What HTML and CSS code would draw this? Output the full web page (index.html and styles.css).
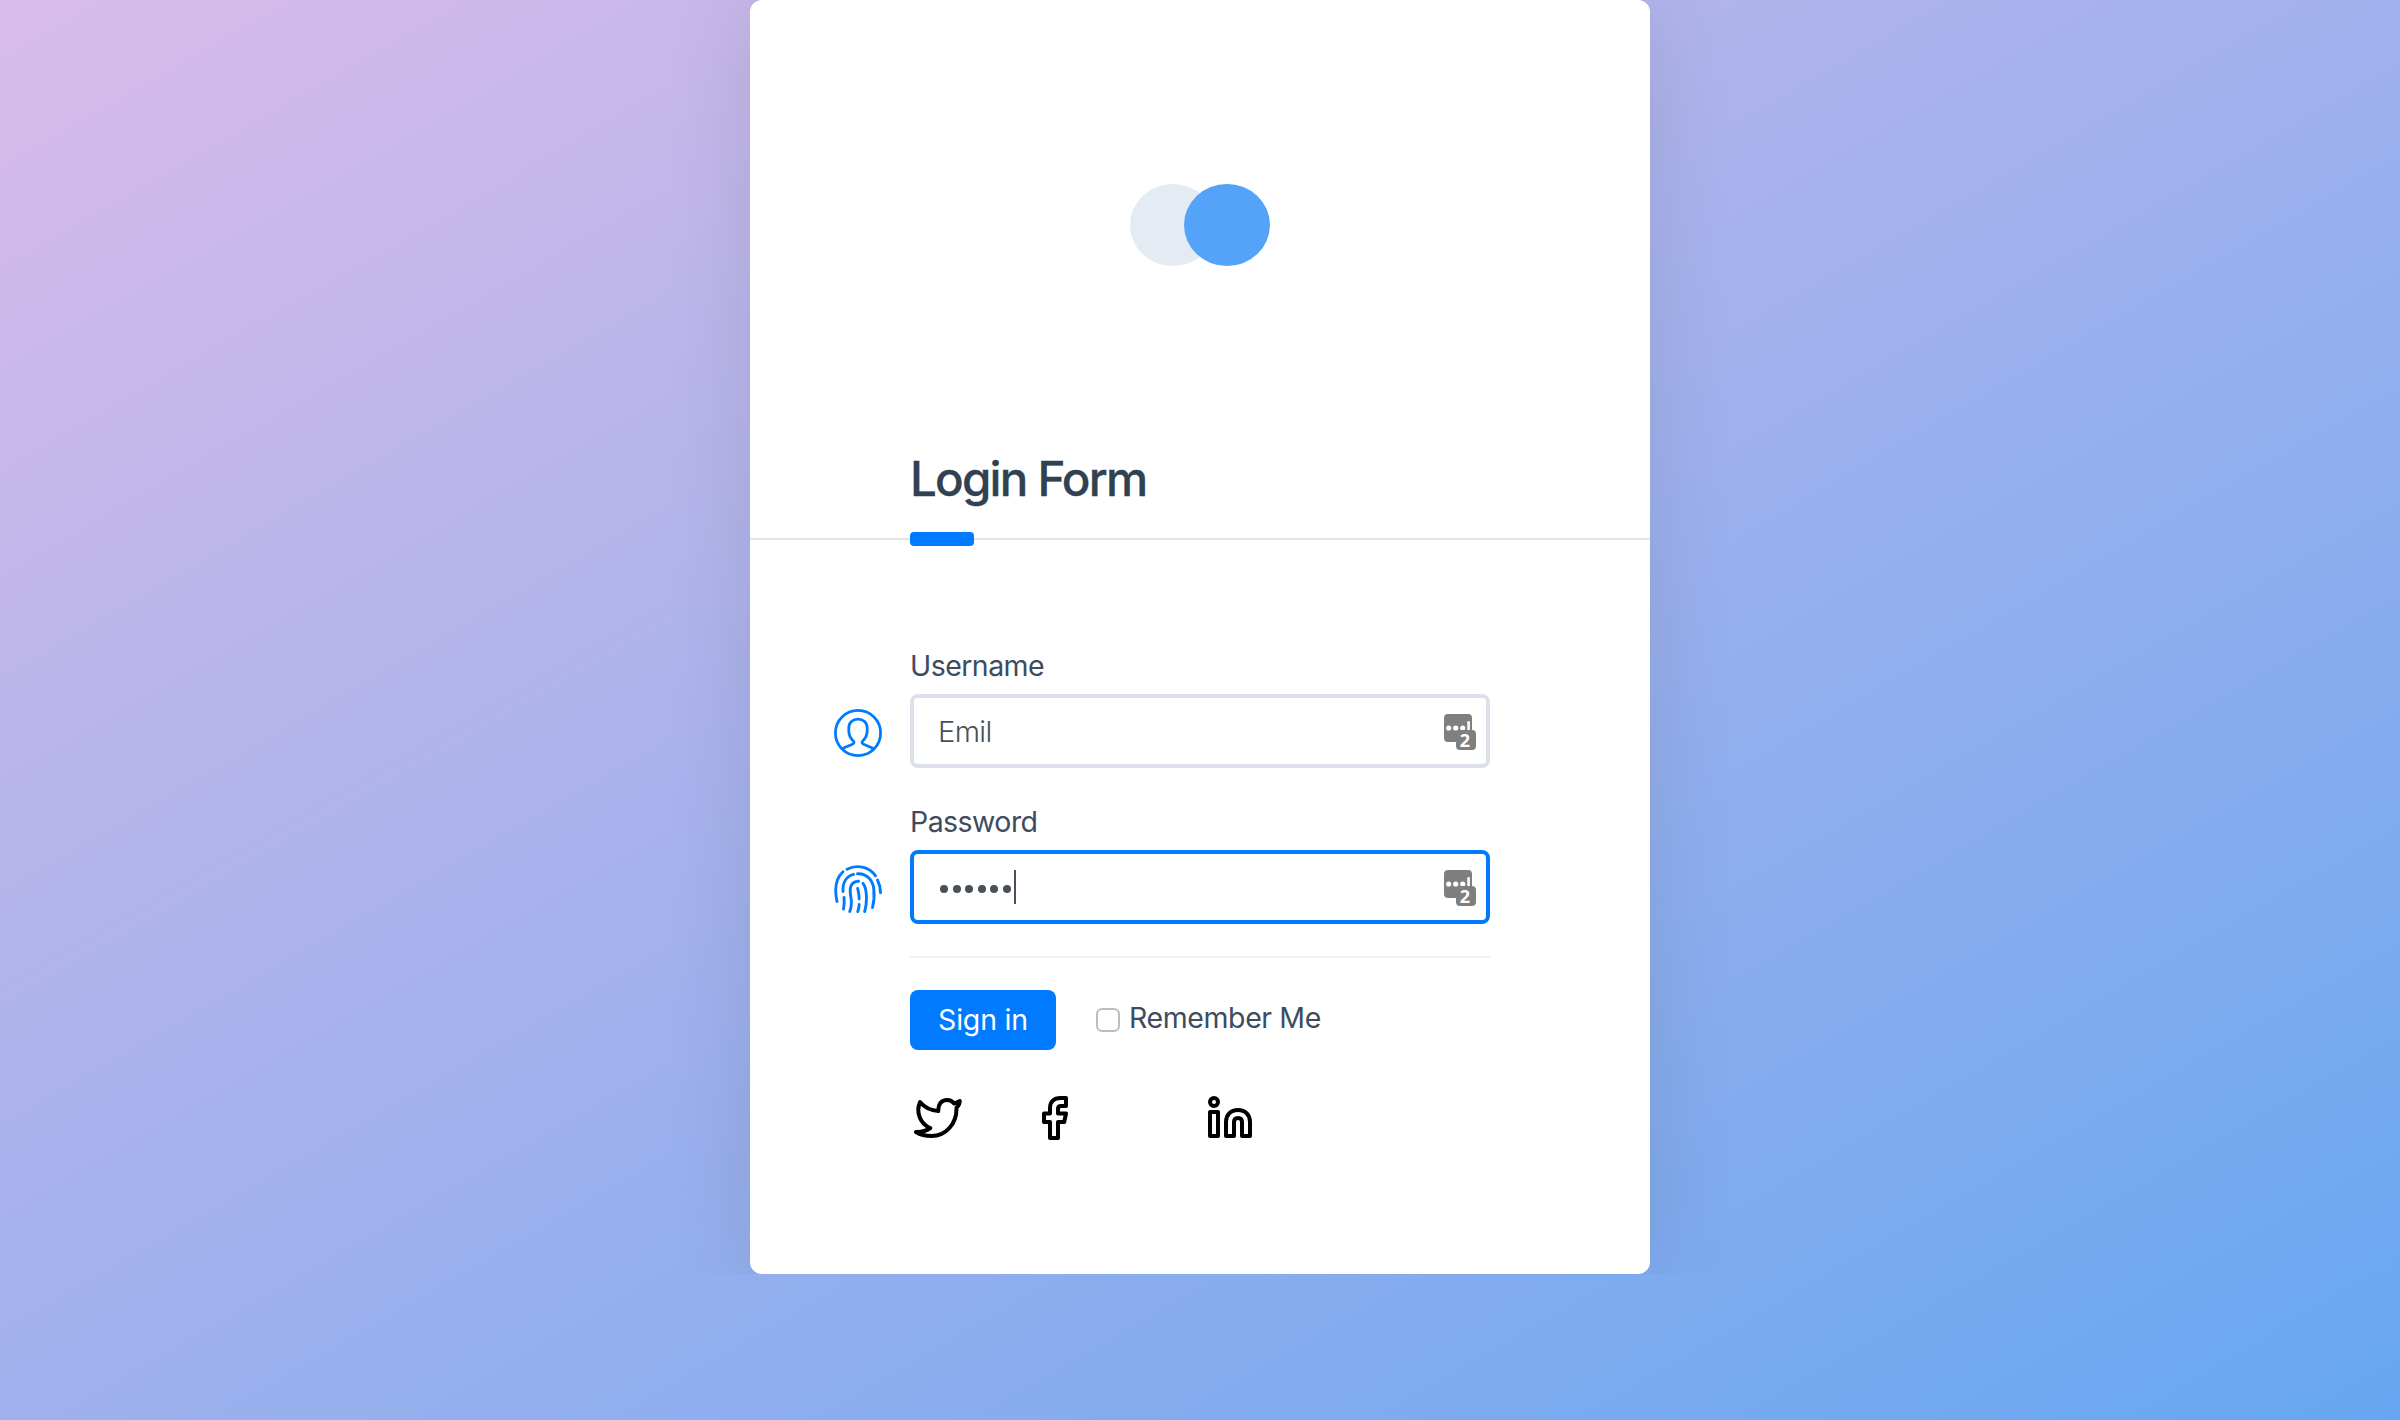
FILE: index.html
```html
<!DOCTYPE html>
<html lang="en">
<head>
<meta charset="utf-8">
<title>Login Form</title>
<link rel="stylesheet" href="styles.css">
</head>
<body>
<main class="stage">
  <section class="card">
    <div class="brand">
      <svg class="logo" viewBox="0 0 140 82" width="140" height="82">
        <ellipse cx="43" cy="41" rx="43" ry="41" fill="#e4ebf3"/>
        <ellipse cx="97" cy="41" rx="43" ry="41" fill="#54a3f8"/>
      </svg>
    </div>
    <header class="card-header">
      <h1 class="title">Login Form</h1>
      <span class="accent"></span>
    </header>
    <form class="form">
      <div class="field">
        <label class="label" for="user">Username</label>
        <svg class="field-icon" viewBox="0 0 48 48" width="48" height="48" fill="none" stroke="#007bff" stroke-width="2.8" stroke-linejoin="round">
          <circle cx="24" cy="24" r="22.6"/>
          <path d="M8.500 39.500l9.900-4.300c1.900-.9 2.100-2 .8-3.300-3.200-3.100-4.400-6.300-4.400-10.100V19c0-5.500 4-8.900 9.200-8.900s9.200 3.400 9.200 8.900v2.800c0 3.800-1.200 7-4.400 10.100-1.300 1.300-1.100 2.400.8 3.300l9.900 4.300"/>
        </svg>
        <div class="control">
          <input class="input" id="user" type="text" value="Emil">
          <svg class="badge" viewBox="0 0 32 36" width="32" height="36">
            <rect width="28" height="28" rx="4" fill="#7f7f7f"/>
            <g fill="#fff"><circle cx="4.700" cy="14" r="2.600"/><circle cx="11.700" cy="14" r="2.600"/><circle cx="18.700" cy="14" r="2.600"/><rect x="23.300" y="7" width="2.600" height="10" rx="1.200"/></g>
            <rect x="12" y="16" width="20" height="20" rx="4" fill="#7f7f7f"/>
          </svg>
          <span class="badge-count">2</span>
        </div>
      </div>
      <div class="field">
        <label class="label" for="pass">Password</label>
        <svg class="field-icon" viewBox="0 0 48 48" width="48" height="48" fill="none" stroke="#007bff" stroke-width="2.900" stroke-linecap="round">
          <path d="M3 36.500C.5 25 .5 14.500 9 6.800M13 4.200C23-.8 35 1.500 41.500 10.800M43.500 15c2 4 3 8 3 12.800"/>
          <path d="M9.500 44c.8-4 1-7.500.5-11.500M9 26.500C8.500 18 12 11.300 19.500 9.300M23.500 8.800C33 8.300 39 15.500 39.800 24c.6 6 .4 12-1.300 18.500"/>
          <path d="M15.800 46.500c2-5 2-9.500 1-15C15.200 23 16.500 16.800 24.500 16.300M29 18.300c4 5 4.500 18 1.700 28.200"/>
          <path d="M23.700 23.500c1 4 1.500 7 1.500 10.500M25.200 39.500c-.2 2.500-.7 4.700-1.400 7"/>
        </svg>
        <div class="control">
          <div class="input input-focus" id="pass"><span class="dots"><i></i><i></i><i></i><i></i><i></i><i></i></span><span class="caret"></span></div>
          <svg class="badge" viewBox="0 0 32 36" width="32" height="36">
            <rect width="28" height="28" rx="4" fill="#7f7f7f"/>
            <g fill="#fff"><circle cx="4.700" cy="14" r="2.600"/><circle cx="11.700" cy="14" r="2.600"/><circle cx="18.700" cy="14" r="2.600"/><rect x="23.300" y="7" width="2.600" height="10" rx="1.200"/></g>
            <rect x="12" y="16" width="20" height="20" rx="4" fill="#7f7f7f"/>
          </svg>
          <span class="badge-count">2</span>
        </div>
      </div>
      <div class="footer">
        <div class="actions">
          <button class="submit" type="button">Sign in</button>
          <label class="remember"><input class="check" type="checkbox"><span class="remember-text">Remember Me</span></label>
        </div>
        <div class="social">
          <svg class="twitter" viewBox="0 0 48 40" width="48" height="40" fill="none" stroke="#000" stroke-width="4" stroke-linejoin="round">
            <path d="M6 4c4.500 5.500 11 8.500 18.300 9C24 6 27.500 2 33 2c3 0 5.300 1 7.200 3.500L45.800 3c-.3 3-1.300 5-3.300 6.500C43 25.500 32 38 17.500 38 11.500 38 6 36.500 2 34c5.500.3 10-1 14.300-4C6.500 26 1.500 14.500 6 4z"/>
          </svg>
          <svg class="facebook" viewBox="0 0 26 44" width="26" height="44" fill="none" stroke="#000" stroke-width="4" stroke-linejoin="round">
            <path d="M24 2h-5.500C12 2 8 6 8 12v5.500H2V26h6v16h8V26h6.200L24 17.500h-8V13c0-2 .8-3 3-3h5z"/>
          </svg>
          <svg class="linkedin" viewBox="0 0 44 42" width="44" height="42" fill="none" stroke="#000" stroke-width="4" stroke-linejoin="round">
            <circle cx="6" cy="6" r="4"/><path d="M2 16h8v24H2zM18 40V26c0-7 4.500-12 12-12s12 5 12 12v14h-8V26c0-2.500-1.500-4-4-4s-4 1.500-4 4v14z"/>
          </svg>
        </div>
      </div>
    </form>
  </section>
</main>
</body>
</html>
```
FILE: styles.css
```css
* { box-sizing: border-box; }
body {
  margin: 0;
  height: 1420px;
  overflow: hidden;
  font-family: Inter, "Liberation Sans", sans-serif;
  color: #3d4c5e;
  background: linear-gradient(150deg, #d9bbe9 0%, #64a6f1 102%);
}
.stage { height: 1274px; overflow: hidden; display: flex; justify-content: center; }
.card {
  width: 900px;
  height: 1274px;
  background: #fff;
  border-radius: 12px;
  box-shadow: 0 0 90px rgba(0, 0, 0, .1);
}
.brand { display: flex; justify-content: center; padding-top: 184px; }
.logo { display: block; }
.card-header { position: relative; height: 274px; padding: 183px 0 0 160px; border-bottom: 2px solid #e5e5e5; }
.title { margin: 0; font-size: 47.500px; line-height: 60px; font-weight: 500; letter-spacing: -1.800px; color: #304152; -webkit-text-stroke: .3px #304152; }
.accent { position: absolute; left: 160px; bottom: -8px; width: 64px; height: 14px; border-radius: 4px; background: #007bff; }
.form { padding: 106px 160px 0 84px; }
.field { display: grid; grid-template-columns: 48px 580px; column-gap: 28px; align-items: center; margin-bottom: 34px; }
.field + .field { margin-bottom: 32px; }
.label { grid-column: 2; height: 48px; font-size: 28.500px; line-height: 40px; letter-spacing: -.55px; }
.field-icon { display: block; position: relative; top: 2px; }
.control { position: relative; }
.input {
  display: flex;
  align-items: center;
  width: 580px;
  height: 74px;
  padding: 0 24px;
  border: 4px solid #dde1ec;
  border-radius: 8px;
  background: #fff;
  font: 300 29px Inter, "Liberation Sans", sans-serif;
  letter-spacing: -.6px;
  color: #495057;
  outline: none;
}
.input-focus { border-color: #007bff; }
.dots { display: flex; gap: 4.600px; padding: 4px 0 0 2px; }
.dots i { width: 8px; height: 8px; border-radius: 50%; background: #495057; }
.caret { width: 2px; height: 34px; margin-left: 3px; background: #495057; }
.badge { position: absolute; right: 14px; top: 20px; }
.badge-count { position: absolute; right: 14px; top: 33px; width: 22px; text-align: center; font: 700 18px/26px "Open Sans", sans-serif; color: #fff; }
.footer { margin-left: 76px; border-top: 2px solid #f0f0f0; padding-top: 32px; }
.actions { display: flex; align-items: center; }
.submit { width: 146px; height: 60px; padding: 0 0 2px; border: 0; border-radius: 8px; background: #007bff; color: #fff; font: 400 28.500px Inter, sans-serif; letter-spacing: -.2px; }
.remember { display: flex; align-items: center; margin-left: 40px; font-size: 28.500px; line-height: 40px; letter-spacing: -.4px; }
.check { appearance: none; width: 24px; height: 24px; margin: 0 9px 0 0; border: 2px solid #bdbdbd; border-radius: 6px; background: #fff; }
.remember-text { position: relative; top: -2px; white-space: nowrap; }
.social { display: flex; align-items: flex-start; padding: 46px 0 0 4px; }
.twitter { margin-top: 2px; }
.facebook { margin-left: 80px; }
.linkedin { margin-left: 140px; }
```
